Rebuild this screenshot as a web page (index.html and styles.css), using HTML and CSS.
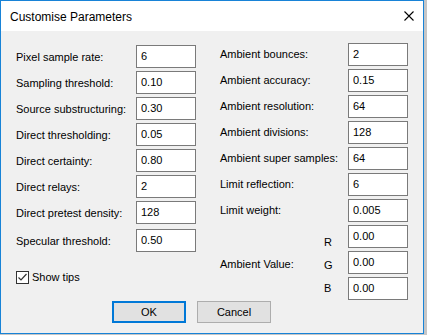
FILE: index.html
```html
<!DOCTYPE html>
<html lang="en">
<head>
<meta charset="UTF-8">
<meta name="viewport" content="width=device-width, initial-scale=1.0">
<title>Customise Parameters</title>
<link rel="stylesheet" href="styles.css">
</head>
<body>

<!-- Dialog window -->
<div class="window">
    <div class="titlebar">
        <span class="title">Customise Parameters</span>
        <svg class="close" width="10" height="10" viewBox="0 0 10 10">
            <path d="M0.5 0.5 L9.5 9.5 M9.5 0.5 L0.5 9.5" stroke="#000" stroke-width="1.1" fill="none"/>
        </svg>
    </div>

    <div class="content">
        <div class="params">
            <!-- Left column -->
            <div class="col col-left">
                <div class="row"><label class="lbl">Pixel sample rate:</label><input class="field" type="text" value="6"></div>
                <div class="row"><label class="lbl">Sampling threshold:</label><input class="field" type="text" value="0.10"></div>
                <div class="row"><label class="lbl">Source substructuring:</label><input class="field" type="text" value="0.30"></div>
                <div class="row"><label class="lbl">Direct thresholding:</label><input class="field" type="text" value="0.05"></div>
                <div class="row"><label class="lbl">Direct certainty:</label><input class="field" type="text" value="0.80"></div>
                <div class="row"><label class="lbl">Direct relays:</label><input class="field" type="text" value="2"></div>
                <div class="row"><label class="lbl">Direct pretest density:</label><input class="field" type="text" value="128"></div>
                <div class="row row-spaced"><label class="lbl">Specular threshold:</label><input class="field" type="text" value="0.50"></div>
                <label class="tips">
                    <span class="checkbox">
                        <svg width="11" height="11" viewBox="0 0 11 11">
                            <path d="M1.5 5.5 L4 8 L9.5 2" stroke="#333" stroke-width="1.2" fill="none"/>
                        </svg>
                    </span>
                    Show tips
                </label>
            </div>

            <!-- Right column -->
            <div class="col col-right">
                <div class="row"><label class="lbl">Ambient bounces:</label><input class="field" type="text" value="2"></div>
                <div class="row"><label class="lbl">Ambient accuracy:</label><input class="field" type="text" value="0.15"></div>
                <div class="row"><label class="lbl">Ambient resolution:</label><input class="field" type="text" value="64"></div>
                <div class="row"><label class="lbl">Ambient divisions:</label><input class="field" type="text" value="128"></div>
                <div class="row"><label class="lbl">Ambient super samples:</label><input class="field" type="text" value="64"></div>
                <div class="row"><label class="lbl">Limit reflection:</label><input class="field" type="text" value="6"></div>
                <div class="row"><label class="lbl">Limit weight:</label><input class="field" type="text" value="0.005"></div>
                <div class="ambient">
                    <span class="ambient-lbl">Ambient Value:</span>
                    <div class="rgb">
                        <div class="row"><span class="chan chan-r">R</span><input class="field" type="text" value="0.00"></div>
                        <div class="row"><span class="chan chan-g">G</span><input class="field" type="text" value="0.00"></div>
                        <div class="row"><span class="chan chan-b">B</span><input class="field" type="text" value="0.00"></div>
                    </div>
                </div>
            </div>
        </div>

        <div class="buttons">
            <button type="button" class="btn btn-default">OK</button>
            <button type="button" class="btn">Cancel</button>
        </div>
    </div>
</div>

</body>
</html>
```

FILE: styles.css
```css
/* Windows style dialog */
body {
    margin: 0;
    background-color: #c6c6c6;
    font-family: "Liberation Sans", Arial, sans-serif;
    font-size: 11px;
    color: #000;
}
.window {
    box-sizing: border-box;
    width: 424px;
    height: 334px;
    border: 1px solid #1883d7;
    background-color: #f0f0f0;
    display: flex;
    flex-direction: column;
}
.titlebar {
    height: 30px;
    background-color: #fff;
    display: flex;
    align-items: center;
    padding: 2px 9px 0 9px;
    box-sizing: border-box;
}
.title {
    flex: 1;
    font-size: 12px;
}
.close {
    display: block;
    margin-right: 0;
    margin-top: -2px;
}
.content {
    padding: 0 15px;
}
.params {
    display: grid;
    grid-template-columns: 180px 188px;
    column-gap: 24px;
    align-items: start;
}
.col {
    display: flex;
    flex-direction: column;
    gap: 3px;
}
.col-left {
    padding-top: 14px;
}
.col-right {
    padding-top: 12px;
}
.row {
    display: flex;
    align-items: center;
    height: 23px;
}
.row-spaced {
    margin-top: 2px;
}
.lbl {
    line-height: 13px;
    white-space: nowrap;
}
.col-left .lbl {
    width: 120px;
    padding-top: 1px;
}
.col-right .lbl {
    width: 128px;
}
.field {
    box-sizing: border-box;
    width: 60px;
    height: 23px;
    margin: 0;
    padding: 3px 4px 5px 4px;
    border: 1px solid #7a7a7a;
    background-color: #fff;
    font-family: "Liberation Sans", Arial, sans-serif;
    font-size: 11px;
    line-height: 13px;
    color: #000;
    outline: none;
}
.tips {
    display: flex;
    align-items: center;
    margin-top: 16px;
    line-height: 13px;
}
.checkbox {
    box-sizing: border-box;
    width: 13px;
    height: 13px;
    border: 1px solid #333;
    background-color: #fff;
    margin-right: 3px;
    display: flex;
}
.ambient {
    display: flex;
}
.ambient-lbl {
    width: 104px;
    align-self: center;
    padding-top: 4px;
    line-height: 13px;
}
.rgb {
    display: flex;
    flex-direction: column;
    gap: 3px;
}
.chan {
    width: 24px;
    align-self: flex-start;
    line-height: 13px;
}
.chan-r {
    padding-top: 11px;
}
.chan-g {
    padding-top: 8px;
}
.chan-b {
    padding-top: 5px;
}
.buttons {
    display: flex;
    gap: 11px;
    margin-top: 1px;
    padding-left: 96px;
}
.btn {
    box-sizing: border-box;
    width: 74px;
    height: 22px;
    padding: 0;
    background-color: #e1e1e1;
    border: 1px solid #adadad;
    font-family: "Liberation Sans", Arial, sans-serif;
    font-size: 11px;
    color: #000;
}
.btn-default {
    border: 2px solid #0078d7;
}
```
